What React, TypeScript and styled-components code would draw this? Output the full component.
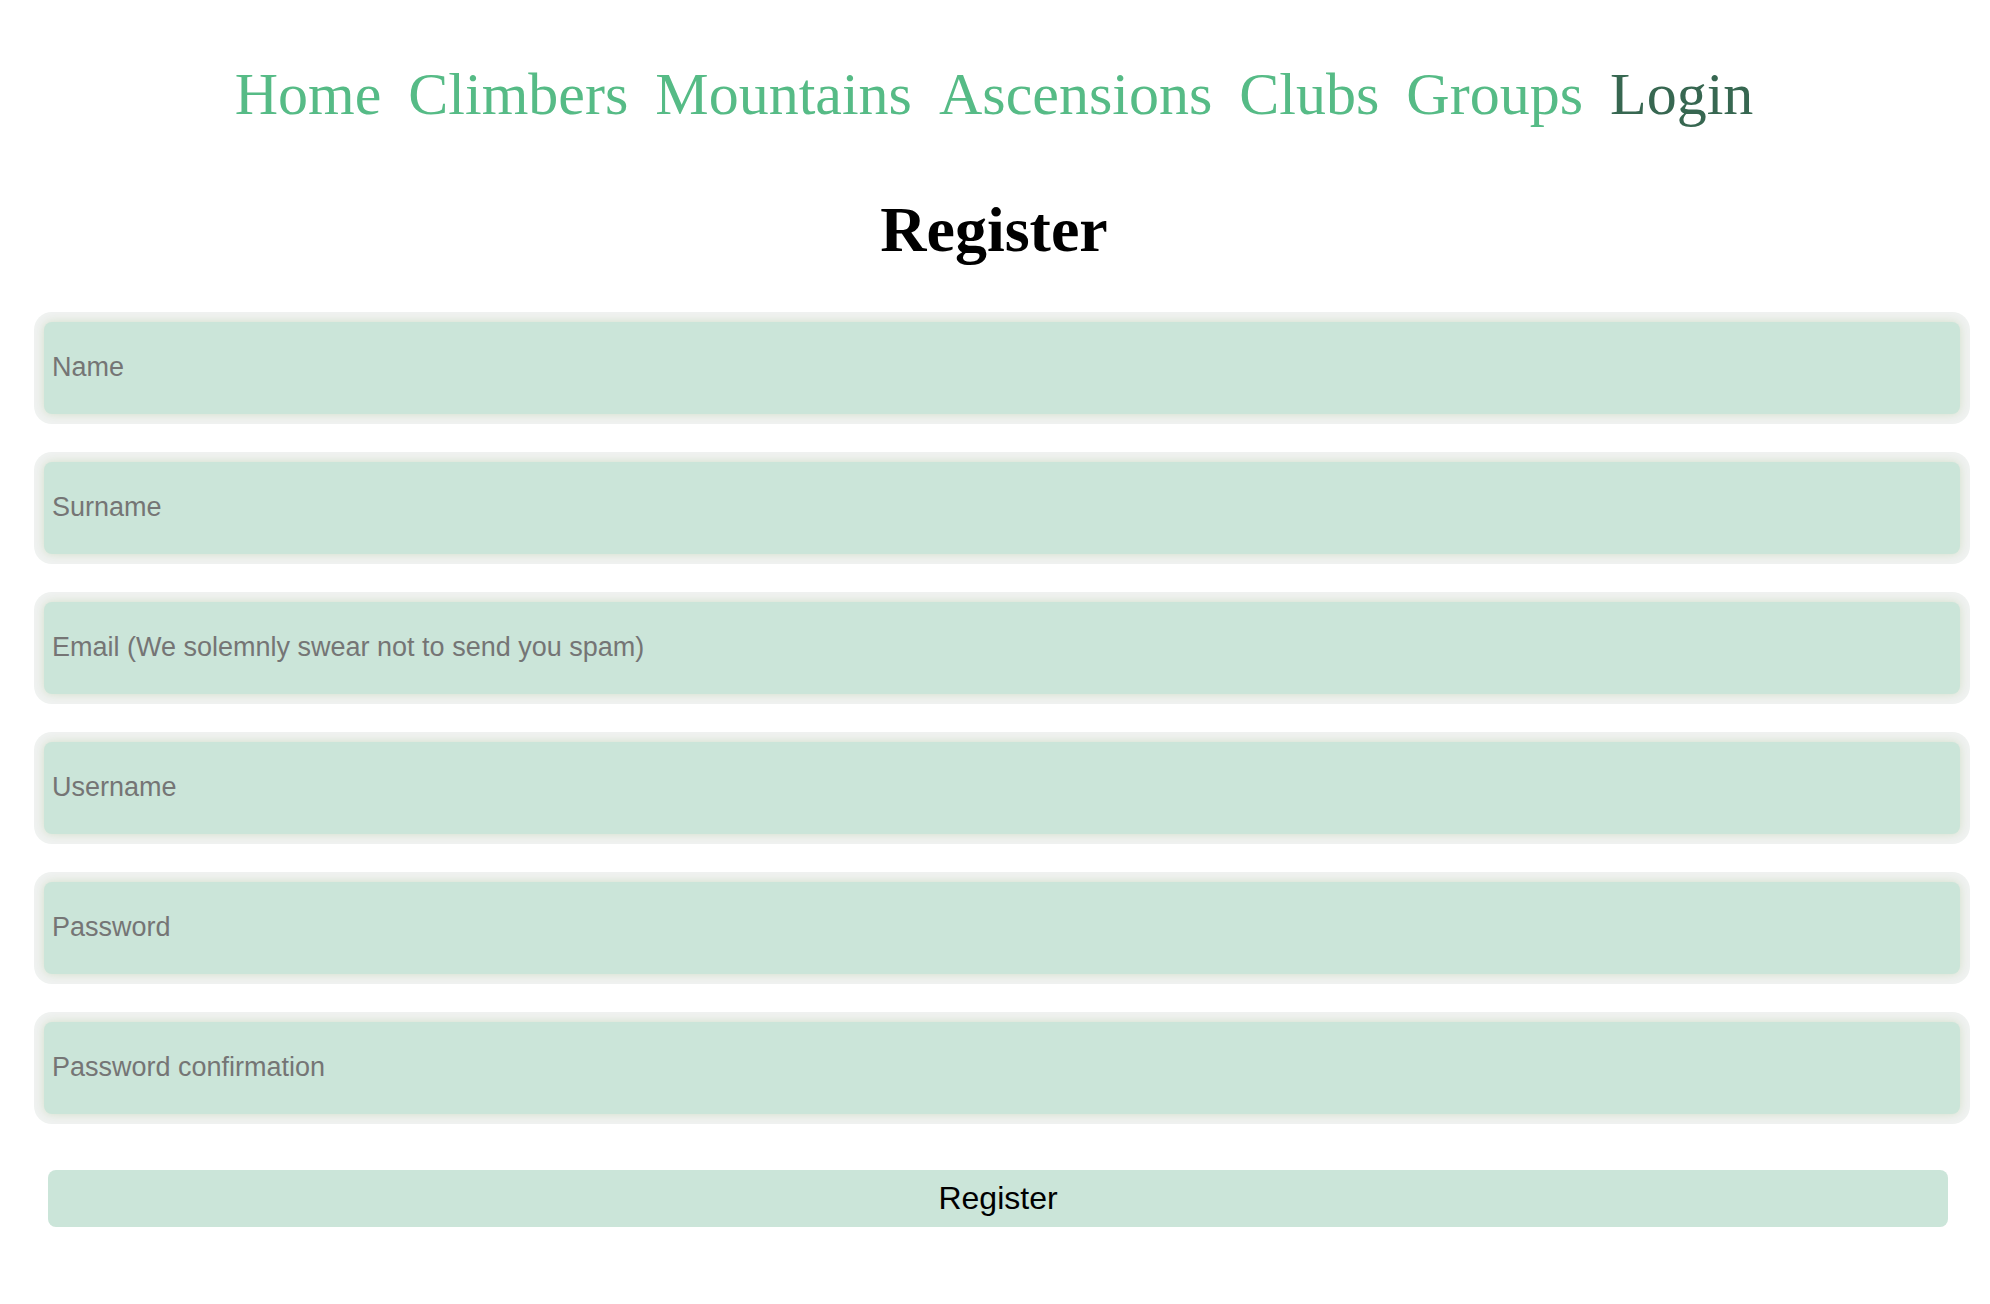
import React from "react";
import styled, { createGlobalStyle } from "styled-components";

const GlobalStyle = createGlobalStyle`
  body {
    margin: 0;
    background: #fff;
    color: #000;
    font-family: "Liberation Serif", "Times New Roman", serif;
  }
`;

const Page = styled.div`
  padding: 60px 20px 40px 34px;
`;

const Nav = styled.nav`
  display: flex;
  flex-wrap: wrap;
  justify-content: center;
  gap: 27px;
  padding-right: 16px;
`;

const NavLink = styled.a<{ $active?: boolean }>`
  color: ${({ $active }) => ($active ? "#376751" : "#56bb86")};
  font-size: 60px;
  line-height: 68px;
  text-decoration: none;
`;

const Title = styled.h1`
  margin: 64px 0 44px;
  padding-right: 16px;
  font-size: 64px;
  line-height: 76px;
  text-align: center;
`;

const Form = styled.form`
  display: flex;
  flex-direction: column;
  gap: 48px;
  padding: 10px;
`;

const Field = styled.input`
  box-sizing: border-box;
  width: 100%;
  height: 92px;
  padding: 0 8px 2px;
  border: 0;
  border-radius: 8px;
  background: #cbe5d9;
  box-shadow:
    0 0 10px rgba(202, 217, 190, 0.8),
    0 0 0 10px #f0f2f1;
  color: #000;
  font-family: "Liberation Sans", Arial, sans-serif;
  font-size: 27px;

  &::placeholder {
    color: #757575;
    opacity: 1;
  }
`;

const Submit = styled.button`
  height: 57px;
  margin: 8px 12px 0 4px;
  border: 0;
  border-radius: 8px;
  background: #cbe5d9;
  color: #000;
  font-family: "Liberation Sans", Arial, sans-serif;
  font-size: 32px;
`;

const links = ["Home", "Climbers", "Mountains", "Ascensions", "Clubs", "Groups", "Login"];

const fields = [
  { name: "name", type: "text", hint: "Name" },
  { name: "surname", type: "text", hint: "Surname" },
  { name: "email", type: "email", hint: "Email (We solemnly swear not to send you spam)" },
  { name: "username", type: "text", hint: "Username" },
  { name: "password", type: "password", hint: "Password" },
  { name: "confirmation", type: "password", hint: "Password confirmation" },
];

export default function App() {
  return (
    <Page>
      <GlobalStyle />
      <Nav>
        {links.map((link) => (
          <NavLink key={link} href={"#" + link.toLowerCase()} $active={link === "Login"}>
            {link}
          </NavLink>
        ))}
      </Nav>
      <main>
        <Title>Register</Title>
        <Form onSubmit={(e) => e.preventDefault()}>
          {fields.map(({ name, type, hint }) => (
            <Field key={name} name={name} type={type} placeholder={hint} aria-label={hint} />
          ))}
          <Submit type="submit">Register</Submit>
        </Form>
      </main>
    </Page>
  );
}
